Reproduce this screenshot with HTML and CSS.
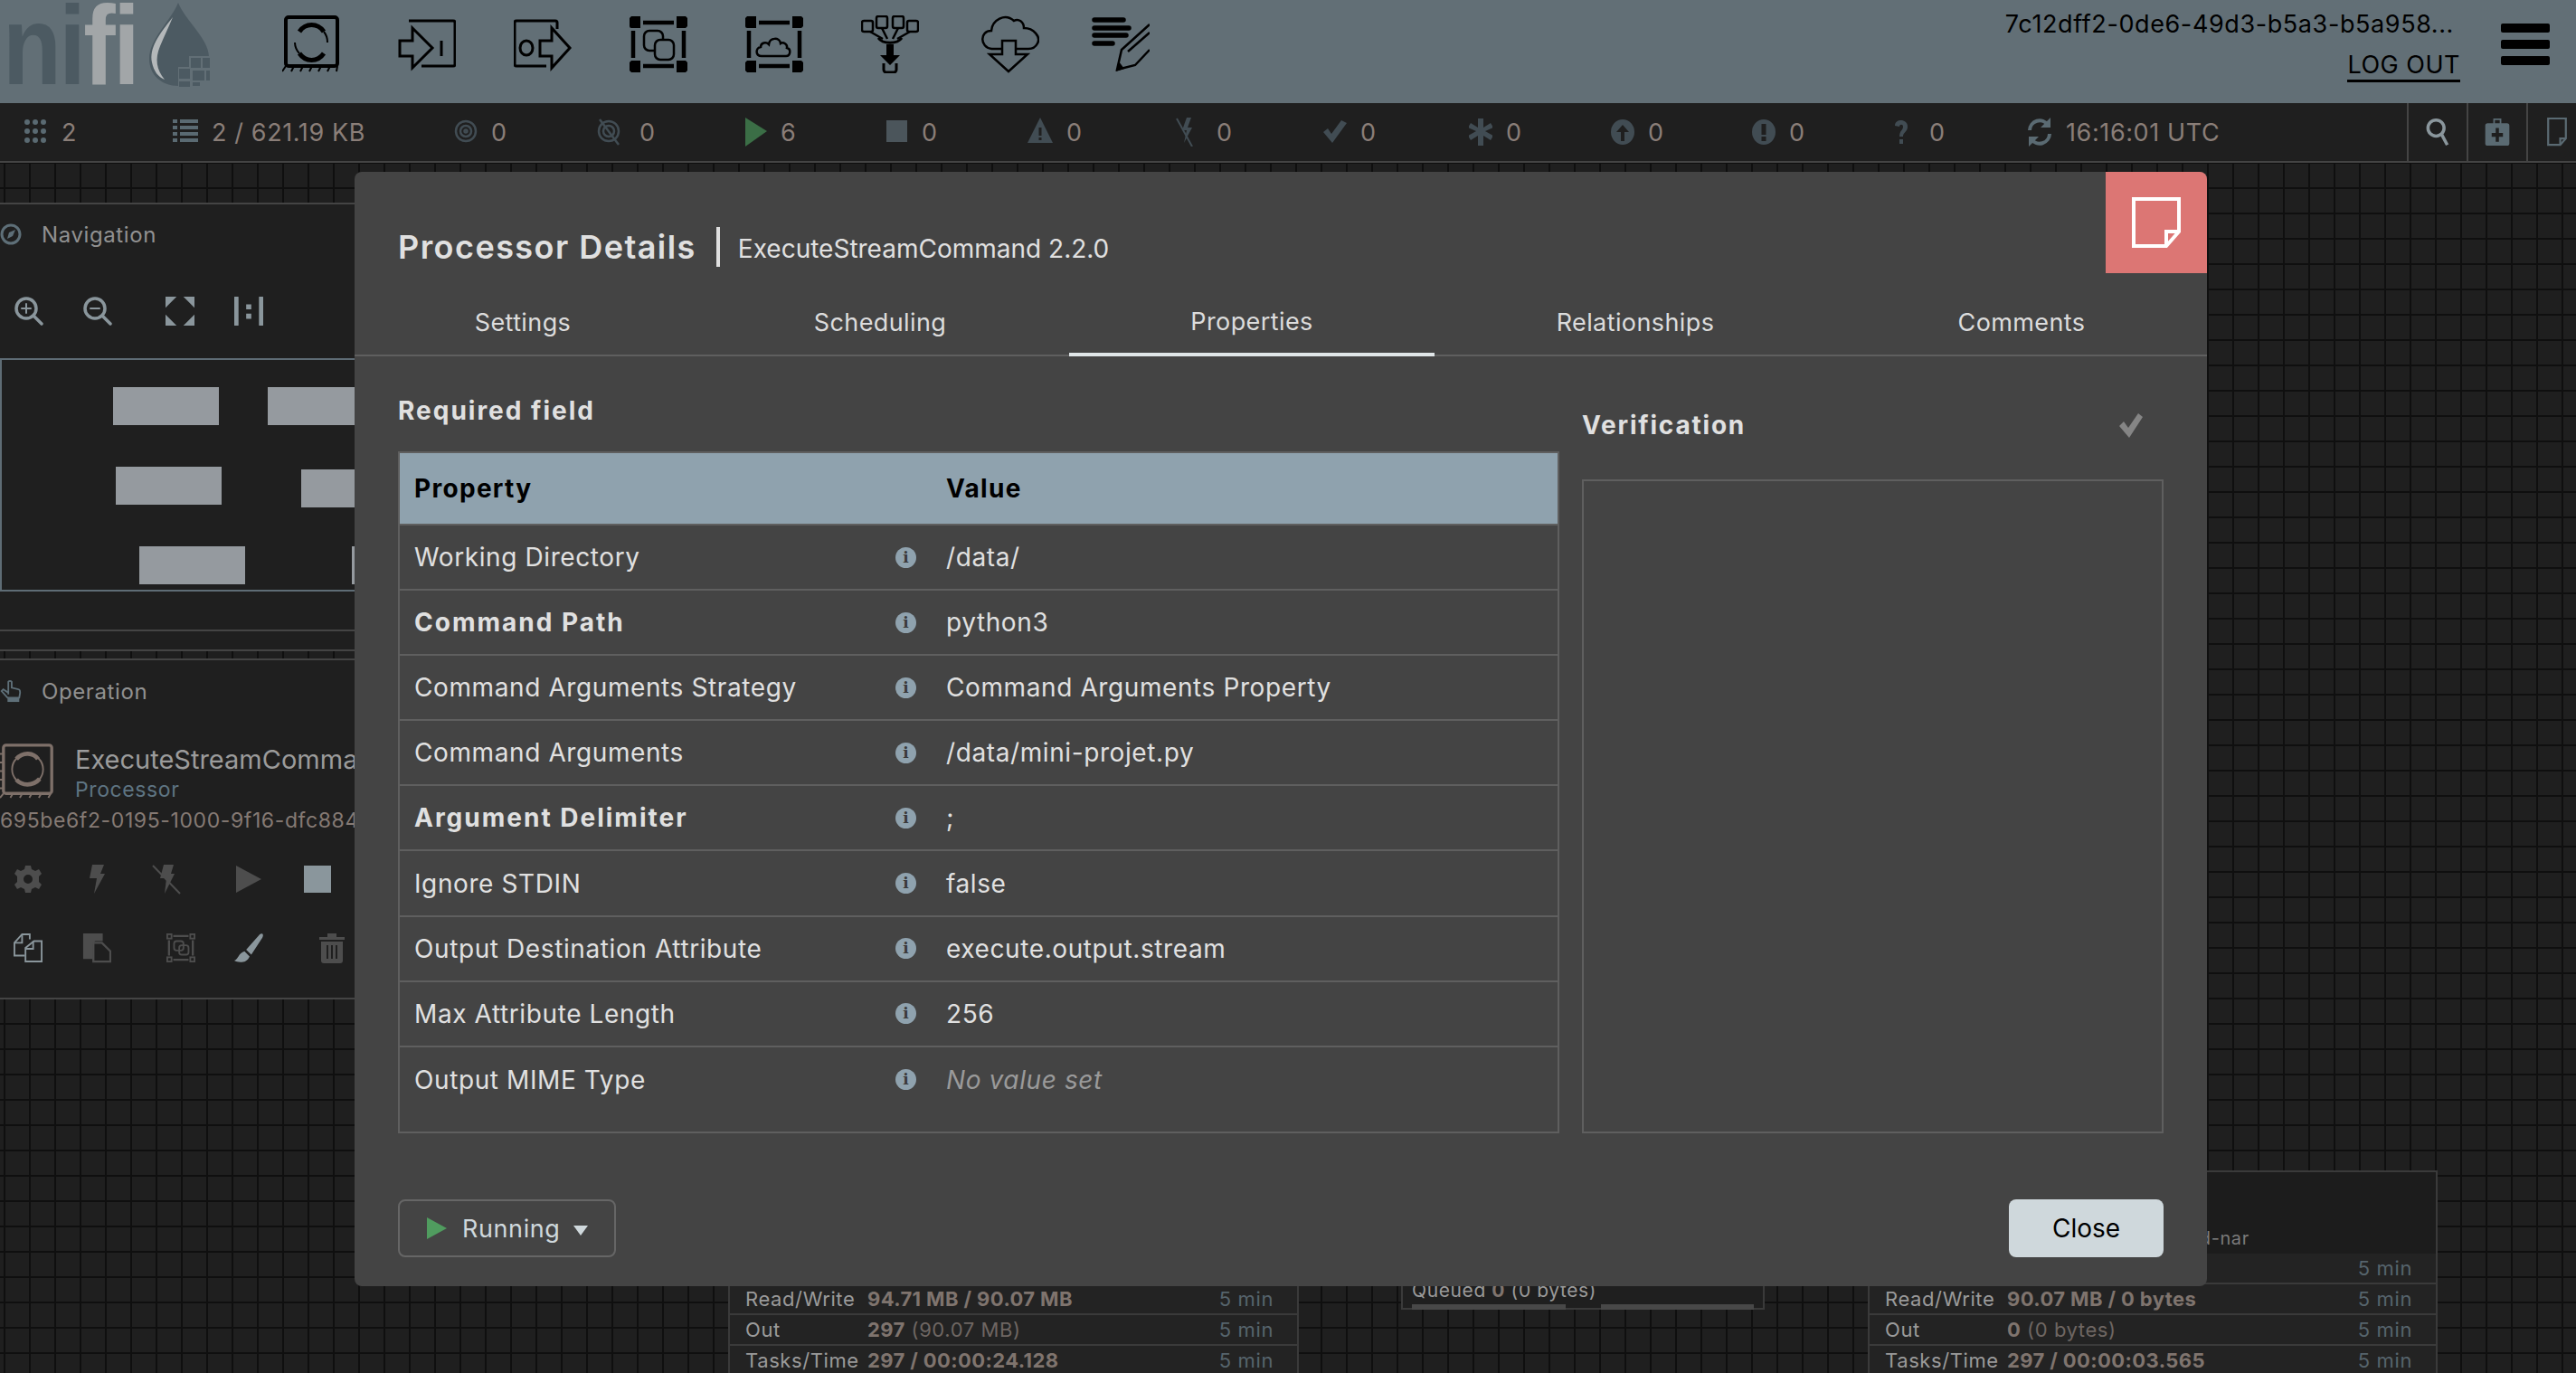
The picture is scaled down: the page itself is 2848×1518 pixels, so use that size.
FILE: index.html

```html
<!DOCTYPE html>
<html lang="en">
<head>
  <meta charset="UTF-8" />
  <title>NiFi - Processor Details</title>
  <link rel="stylesheet" href="styles.css">
</head>
<body>
  <header class="topbar">
    <div class="logo">
      <span class="logo-text"><span class="logo-dark">ni</span><span class="logo-light">fi</span></span>
      <svg class="logo-drop" viewBox="0 0 70 95">
        <path fill="#4c5a62" d="M32 0C24 20 0 40 0 62C0 80 14 92 32 92C50 92 66 80 66 60C66 40 40 20 32 0Z"/>
        <path fill="#b4b8ba" d="M26 16C10 36 0 50 3 66C5 76 10 82 17 85C8 74 6 62 12 48C16 38 22 26 26 16Z"/>
        <path fill="#626f76" d="M44 59H70V95H32V71H44Z"/>
        <path fill="#4c5a62" d="M46 61H57V72H46ZM59 61H67V72H59ZM33 73H45V84H33ZM48 75H61V86H48ZM63 75H67V86H63ZM33 87H45V93H33ZM48 88H56V92H48Z"/>
      </svg>
    </div>
    <div class="tools">
      <svg class="tool" viewBox="0 0 64 64" fill="none" stroke="#000" stroke-width="4">
        <rect x="4" y="2" width="57" height="54" rx="3"/>
        <path d="M0 62L4 56M10 62L13 56M20 62L23 56M30 62L33 56M40 62L43 56M50 62L53 56M60 62L61 56" stroke-width="2"/>
        <path d="M19 18A17 19 0 0 1 46 18" stroke-width="5"/>
        <path d="M46 42A17 19 0 0 1 19 42" stroke-width="5"/>
        <path d="M14 30A18 18 0 0 0 19 42M50 30A18 18 0 0 0 46 18" stroke-width="2"/>
      </svg>
      <svg class="tool" viewBox="0 0 64 64" fill="none" stroke="#000" stroke-width="3">
        <path d="M12 6H61A2 2 0 0 1 63 8V54A2 2 0 0 1 61 56H26"/>
        <path d="M2 28H16V14L38 36L16 58V45H2Z"/>
        <path d="M48 28V45"/>
      </svg>
      <svg class="tool" viewBox="0 0 64 64" fill="none" stroke="#000" stroke-width="3">
        <path d="M48 15V8A2 2 0 0 0 46 6H3A2 2 0 0 0 1 8V54A2 2 0 0 0 3 56H36"/>
        <ellipse cx="14" cy="36" rx="7" ry="8"/>
        <path d="M29 28H42V14L62 36L42 58V45H29Z"/>
      </svg>
      <svg class="tool" viewBox="0 0 64 64" fill="none" stroke="#000" stroke-width="2.500">
        <path fill="#000" stroke="none" d="M2 1H12V14H2A2 2 0 0 1 0 12V3ZM52 1H62L64 3V12L62 14H52ZM2 50H12V63H2L0 61V52ZM52 50H62L64 52V61L62 63H52Z"/>
        <path stroke-width="4.500" d="M15 8H49M15 56H49M4 17V47M60 17V47"/>
        <rect x="16" y="17" width="21" height="22" rx="6"/>
        <rect x="28" y="27" width="21" height="22" rx="6" fill="#626f76"/>
      </svg>
      <svg class="tool" viewBox="0 0 64 64" fill="none" stroke="#000" stroke-width="2.500">
        <path fill="#000" stroke="none" d="M2 1H12V14H2A2 2 0 0 1 0 12V3ZM52 1H62L64 3V12L62 14H52ZM2 50H12V63H2L0 61V52ZM52 50H62L64 52V61L62 63H52Z"/>
        <path stroke-width="4.500" d="M15 8H49M15 56H49M4 17V47M60 17V47"/>
        <path d="M18 45C11 45 11 36 17 35C17 30 23 29 26 32C27 24 38 24 39 31C42 29 47 32 46 36C51 37 50 45 45 45Z"/>
      </svg>
      <svg class="tool tool-funnel" viewBox="0 0 64 64" fill="none" stroke="#000" stroke-width="2.500">
        <rect x="1" y="6" width="12" height="12" rx="2"/><rect x="17" y="1" width="12" height="13" rx="2"/>
        <rect x="35" y="1" width="12" height="13" rx="2"/><rect x="51" y="6" width="12" height="12" rx="2"/>
        <path d="M10 18L24 26M23 14L29 26M41 14L35 26M54 18L40 26"/>
        <path stroke-width="3" d="M19 25C24 32 40 32 45 25"/>
        <path fill="#000" stroke="none" d="M28 32H36V44H43L32 55L21 44H28Z"/>
        <path stroke-width="3" d="M25 53V60A3 3 0 0 0 28 63H36A3 3 0 0 0 39 60V53"/>
      </svg>
      <svg class="tool" viewBox="0 0 64 64" fill="none" stroke="#000" stroke-width="2.500">
        <path d="M11 37C-2 35 -2 17 11 17C12 5 26 -3 36 6C41 3 47 7 47 14C58 14 66 24 62 31C60 35 56 37 52 37H39"/>
        <path d="M24 37H11"/>
        <path d="M23 43V28H38V43H51L30 62L9 43Z"/>
      </svg>
      <svg class="tool tool-label" viewBox="0 0 64 64" fill="none" stroke="#000" stroke-width="2.500">
        <path stroke-width="5.500" stroke-linecap="round" d="M3 5H35M3 14H41M3 22H38M3 31H23"/>
        <path d="M64 10L33 38L28 60L48 55L64 38"/>
        <path d="M40 40L64 19"/>
        <path fill="#000" stroke="none" d="M27 62L30 51L36 59Z"/>
      </svg>
    </div>
    <div class="user">
      <div class="user-id">7c12dff2-0de6-49d3-b5a3-b5a958...</div>
      <div class="logout">LOG OUT</div>
    </div>
    <div class="burger"><span></span><span></span><span></span></div>
  </header>

  <div class="statusbar">
    <div class="stats">
      <div class="stat">
        <svg viewBox="0 0 28 32" fill="#5a6a72"><circle cx="5" cy="5" r="3"/><circle cx="14" cy="5" r="3"/><circle cx="23" cy="5" r="3"/><circle cx="5" cy="15" r="3"/><circle cx="14" cy="15" r="3"/><circle cx="23" cy="15" r="3"/><circle cx="5" cy="25" r="3"/><circle cx="14" cy="25" r="3"/><circle cx="23" cy="25" r="3"/></svg>2
      </div>
      <div class="stat">
        <svg viewBox="0 0 28 32" fill="#5a6a72"><path d="M0 2H5V6H0ZM8 2H28V6H8ZM0 9H5V13H0ZM8 9H28V13H8ZM0 16H5V20H0ZM8 16H28V20H8ZM0 23H5V27H0ZM8 23H28V27H8Z"/></svg>2 / 621.19 KB
      </div>
      <div class="stat">
        <svg viewBox="0 0 26 32" fill="none" stroke="#414c53" stroke-width="2.500"><circle cx="13" cy="15" r="11"/><circle cx="13" cy="15" r="6"/><circle cx="13" cy="15" r="1.500"/></svg>0
      </div>
      <div class="stat">
        <svg viewBox="0 0 32 32" fill="none" stroke="#414c53" stroke-width="2.500"><circle cx="13" cy="15" r="11"/><circle cx="13" cy="15" r="6"/><path d="M3 2L24 30"/></svg>0
      </div>
      <div class="stat">
        <svg viewBox="0 0 24 32" fill="#3b6e46"><path d="M0 0L24 15L0 32Z"/></svg>6
      </div>
      <div class="stat">
        <svg viewBox="0 0 24 32" fill="#4b555b"><rect y="3" width="23" height="24"/></svg>0
      </div>
      <div class="stat">
        <svg viewBox="0 0 28 32" fill="#414c53"><path d="M14 0L28 28H0ZM12.500 11V20H15.500V11ZM12.500 22V25H15.500V22Z" fill-rule="evenodd"/></svg>0
      </div>
      <div class="stat">
        <svg viewBox="0 0 32 32" fill="#414c53"><path d="M14 0L9 14H14L11 28L20 11H15L19 0Z"/><path d="M3 1L20 32" stroke="#414c53" stroke-width="2"/></svg>0
      </div>
      <div class="stat">
        <svg viewBox="0 0 26 32" fill="#414c53"><path d="M0 16L5 12L9 18L20 3L26 6L10 28Z"/></svg>0
      </div>
      <div class="stat">
        <svg viewBox="0 0 26 32" fill="#414c53"><path d="M10 1H16V11L24 6L27 11L18 15L27 20L24 25L16 20V31H10V20L2 25L-1 20L8 15L-1 11L2 6L10 11Z"/></svg>0
      </div>
      <div class="stat">
        <svg viewBox="0 0 26 32" fill="#414c53"><path fill-rule="evenodd" d="M13 2A13 14 0 1 1 13 30A13 14 0 1 1 13 2ZM13 8L6 16H11V26H15V16H20Z"/></svg>0
      </div>
      <div class="stat">
        <svg viewBox="0 0 26 32" fill="#414c53"><path fill-rule="evenodd" d="M13 2A13 14 0 1 1 13 30A13 14 0 1 1 13 2ZM10.500 7V19H15.500V7ZM10.500 21V26H15.500V21Z"/></svg>0
      </div>
      <div class="stat">
        <svg viewBox="0 0 24 32" fill="#414c53"><path d="M1 9C1 1 15 1 15 10C15 16 10 16 10 21H6C6 14 10 14 10 10C10 7 6 7 6 10ZM6 24H10V29H6Z"/></svg>0
      </div>
      <div class="stat stat-time">
        <svg viewBox="0 0 28 32" fill="none" stroke="#5a6a72" stroke-width="4"><path d="M3 14A11 11 0 0 1 23 8"/><path d="M25 18A11 11 0 0 1 5 24"/><path fill="#5a6a72" stroke="none" d="M26 0V11H15ZM2 32V21H13Z"/></svg>16:16:01 UTC
      </div>
    </div>
    <div class="bar-btn bar-search">
      <svg viewBox="0 0 30 36" fill="none" stroke="#8a969c" stroke-width="4"><circle cx="13" cy="13" r="10"/><path d="M20 21L27 34"/></svg>
    </div>
    <div class="bar-btn">
      <svg viewBox="0 0 30 36" fill="#5a6a72"><path fill-rule="evenodd" d="M10 1H20V7H27A3 3 0 0 1 30 10V32A3 3 0 0 1 27 35H3A3 3 0 0 1 0 32V10A3 3 0 0 1 3 7H10ZM12 3V7H18V3ZM13 13V19H8V24H13V30H17V24H22V19H17V13Z"/></svg>
    </div>
    <div class="bar-btn bar-note">
      <svg viewBox="0 0 26 36" fill="none" stroke="#5a6a72" stroke-width="2.500"><path d="M2 1H24V26L17 34H2Z"/><path d="M24 26H17V34"/></svg>
    </div>
  </div>

  <main class="canvas">
    <section class="panel panel-nav">
      <div class="panel-title">
        <svg viewBox="0 0 24 24" fill="none" stroke="#5e6f78" stroke-width="3"><circle cx="12" cy="12" r="10"/><path fill="#5e6f78" stroke="none" d="M17 7L14 14L8 17L10 10Z"/></svg>
        Navigation
      </div>
      <div class="nav-tools">
        <svg viewBox="0 0 32 32" fill="none" stroke="#8a969c" stroke-width="3.500" stroke-linecap="round"><circle cx="13" cy="13" r="11"/><path d="M21 21L30 30"/><path stroke-width="2" d="M13 8V18M8 13H18"/></svg>
        <svg viewBox="0 0 32 32" fill="none" stroke="#8a969c" stroke-width="3.500" stroke-linecap="round"><circle cx="13" cy="13" r="11"/><path d="M21 21L30 30"/><path stroke-width="2" d="M8 13H18"/></svg>
        <svg viewBox="0 0 34 34" fill="#8a969c"><path d="M0 0H13L0 13ZM21 0H34V13ZM0 21L13 34H0ZM34 21V34H21Z"/></svg>
        <svg viewBox="0 0 34 34" fill="#8a969c"><path d="M0 1A1 1 0 0 1 5 1V33A1 1 0 0 1 0 33ZM29 1A1 1 0 0 1 34 1V33A1 1 0 0 1 29 33ZM14 9H20V15H14ZM14 20H20V26H14Z"/></svg>
      </div>
      <div class="minimap">
        <div class="mini-node mini-a"></div>
        <div class="mini-node mini-b"></div>
        <div class="mini-node mini-c"></div>
        <div class="mini-node mini-d"></div>
        <div class="mini-node mini-e"></div>
        <div class="mini-node mini-f"></div>
      </div>
      <div class="nav-rule"></div>
    </section>

    <section class="panel panel-op">
      <div class="panel-title">
        <svg viewBox="0 0 24 28" fill="none" stroke="#5e6f78" stroke-width="2"><path d="M9 18V3A2.500 2.500 0 0 1 13 3V10L21 12C23 12 23 14 23 16L22 22H8L1 14L3 12L9 16"/><path fill="#5e6f78" stroke="none" d="M8 22H22V27H8Z"/></svg>
        Operation
      </div>
      <div class="op-head">
        <svg class="op-icon" viewBox="0 0 64 64" fill="none" stroke="#7e7069" stroke-width="3.500">
          <rect x="4" y="2" width="56" height="56" rx="3"/>
          <path stroke-width="2" d="M0 63L4 58M12 63L15 58M23 63L26 58M34 63L37 58M45 63L48 58M56 63L59 58M0 12H4M0 22H4M0 32H4M0 42H4M0 52H4"/>
          <circle cx="32" cy="30" r="18" stroke-width="2"/>
          <path stroke-width="5" d="M19 18C27 9 39 11 44 18M46 41C38 50 25 49 19 42"/>
        </svg>
        <div class="op-names">
          <div class="op-name">ExecuteStreamCommand</div>
          <div class="op-type">Processor</div>
        </div>
      </div>
      <div class="op-id">695be6f2-0195-1000-9f16-dfc884f3a2c1</div>
      <div class="op-row op-row-one">
        <svg viewBox="0 0 32 32" fill="#4d4d4d"><path fill-rule="evenodd" d="M13 1H19L20 5L24 7L28 5L31 10L28 13V19L31 22L28 27L24 25L20 27L19 31H13L12 27L8 25L4 27L1 22L4 19V13L1 10L4 5L8 7L12 5ZM16 11A5 5 0 1 0 16 21A5 5 0 0 0 16 11Z"/></svg>
        <svg viewBox="0 0 32 32" fill="#4d4d4d"><path d="M11 0H24L20 10H25L13 32L16 15H8Z"/></svg>
        <svg viewBox="0 0 32 32" fill="#4d4d4d"><path d="M13 0H24L21 10H25L14 32L16 15H9Z"/><path d="M1 1L31 32" stroke="#4d4d4d" stroke-width="2"/></svg>
        <svg viewBox="0 0 32 32" fill="#4d4d4d"><path d="M2 1L30 16L2 31Z"/></svg>
        <svg viewBox="0 0 32 32" fill="#8a969c"><rect x="1" y="1" width="30" height="30"/></svg>
      </div>
      <div class="op-row op-row-two">
        <svg viewBox="0 0 34 34" fill="none" stroke="#8a969c" stroke-width="2"><path d="M19 7V1H10L1 11V26H13"/><path d="M10 1V11H1"/><path d="M24 9H33V33H14V17Z"/><path d="M23 9V18H14"/></svg>
        <svg viewBox="0 0 34 34"><path fill="#4d4d4d" d="M1 0H24V9H15L12 13V30H1Z"/><path fill="none" stroke="#4d4d4d" stroke-width="2.500" d="M13 11H23L33 21V33H13Z"/></svg>
        <svg viewBox="0 0 34 34" fill="none" stroke="#4d4d4d" stroke-width="2"><rect x="1" y="1" width="5" height="5"/><rect x="28" y="1" width="5" height="5"/><rect x="1" y="28" width="5" height="5"/><rect x="28" y="28" width="5" height="5"/><path stroke-width="2.500" d="M8 3H26M8 31H26M3 8V26M31 8V26"/><rect x="9" y="9" width="11" height="11" rx="3"/><rect x="15" y="14" width="11" height="11" rx="3"/></svg>
        <svg viewBox="0 0 34 34" fill="#8a969c"><path d="M14 19L30 1C33 -1 35 1 33 5L20 25ZM12 21L18 27C15 35 5 35 0 32C5 30 5 23 12 21Z"/></svg>
        <svg viewBox="0 0 30 34" fill="#4d4d4d"><path fill-rule="evenodd" d="M10 1H20V5H29V8H1V5H10ZM3 10H27V31A3 3 0 0 1 24 34H6A3 3 0 0 1 3 31ZM9 14V29H11V14ZM14 14V29H16V14ZM19 14V29H21V14Z"/></svg>
      </div>
    </section>

    <article class="node node-left">
      <div class="node-head"></div>
      <div class="node-row"><span class="node-age">5 min</span></div>
      <div class="node-row"><span class="node-label">Read/Write</span><span class="node-value"><b>94.71 MB / 90.07 MB</b></span><span class="node-age">5 min</span></div>
      <div class="node-row"><span class="node-label">Out</span><span class="node-value"><b>297</b> (90.07 MB)</span><span class="node-age">5 min</span></div>
      <div class="node-row"><span class="node-label">Tasks/Time</span><span class="node-value"><b>297 / 00:00:24.128</b></span><span class="node-age">5 min</span></div>
    </article>

    <article class="conn-label">
      <div class="conn-text">Queued <b>0</b> (0 bytes)</div>
      <div class="conn-bars"><span></span><span></span></div>
    </article>

    <article class="node node-right">
      <div class="node-head"><span class="node-bundle">rd-nar</span></div>
      <div class="node-row"><span class="node-age">5 min</span></div>
      <div class="node-row"><span class="node-label">Read/Write</span><span class="node-value"><b>90.07 MB / 0 bytes</b></span><span class="node-age">5 min</span></div>
      <div class="node-row"><span class="node-label">Out</span><span class="node-value"><b>0</b> (0 bytes)</span><span class="node-age">5 min</span></div>
      <div class="node-row"><span class="node-label">Tasks/Time</span><span class="node-value"><b>297 / 00:00:03.565</b></span><span class="node-age">5 min</span></div>
    </article>
  </main>

  <div class="modal">
    <div class="modal-note">
      <svg viewBox="0 0 54 56" fill="none" stroke="#fff" stroke-width="4"><path d="M2 2H52V38L38 54H2Z"/><path d="M52 38H38V54"/></svg>
    </div>
    <div class="modal-head">
      <span class="modal-title">Processor Details</span>
      <span class="modal-sep"></span>
      <span class="modal-sub">ExecuteStreamCommand 2.2.0</span>
    </div>
    <div class="tabs">
      <div class="tab">Settings</div>
      <div class="tab">Scheduling</div>
      <div class="tab tab-active">Properties</div>
      <div class="tab">Relationships</div>
      <div class="tab">Comments</div>
    </div>
    <div class="modal-body">
      <div class="col-props">
        <div class="required">Required field</div>
        <div class="props">
          <div class="prop-row prop-head"><div class="prop-name">Property</div><div class="prop-value">Value</div></div>
          <div class="prop-row"><div class="prop-name">Working Directory<span class="info">i</span></div><div class="prop-value">/data/</div></div>
          <div class="prop-row"><div class="prop-name is-required">Command Path<span class="info">i</span></div><div class="prop-value">python3</div></div>
          <div class="prop-row"><div class="prop-name">Command Arguments Strategy<span class="info">i</span></div><div class="prop-value">Command Arguments Property</div></div>
          <div class="prop-row"><div class="prop-name">Command Arguments<span class="info">i</span></div><div class="prop-value">/data/mini-projet.py</div></div>
          <div class="prop-row"><div class="prop-name is-required">Argument Delimiter<span class="info">i</span></div><div class="prop-value">;</div></div>
          <div class="prop-row"><div class="prop-name">Ignore STDIN<span class="info">i</span></div><div class="prop-value">false</div></div>
          <div class="prop-row"><div class="prop-name">Output Destination Attribute<span class="info">i</span></div><div class="prop-value">execute.output.stream</div></div>
          <div class="prop-row"><div class="prop-name">Max Attribute Length<span class="info">i</span></div><div class="prop-value">256</div></div>
          <div class="prop-row prop-last"><div class="prop-name">Output MIME Type<span class="info">i</span></div><div class="prop-value no-value">No value set</div></div>
        </div>
      </div>
      <div class="col-verify">
        <div class="verify-head">
          <span>Verification</span>
          <svg viewBox="0 0 26 28" fill="#858585"><path d="M0 15L5 10L10 17L21 1L26 5L11 28Z"/></svg>
        </div>
        <div class="verify-box"></div>
      </div>
    </div>
    <div class="modal-foot">
      <div class="btn-running">
        <svg class="run-play" viewBox="0 0 22 24" fill="#509c5f"><path d="M0 0L22 12L0 24Z"/></svg>
        Running
        <svg class="run-caret" viewBox="0 0 16 11" fill="#cfd8dc"><path d="M0 0H16L8 11Z"/></svg>
      </div>
      <div class="btn-close">Close</div>
    </div>
  </div>
</body>
</html>
```

FILE: styles.css

```css
* {
  box-sizing: border-box;
}
body {
  margin: 0;
  width: 2848px;
  height: 1518px;
  overflow: hidden;
  position: relative;
  display: flex;
  flex-direction: column;
  font-family: Inter, "Noto Sans", sans-serif;
  letter-spacing: 0.6px;
  background-color: #1f1f1f;
  color: #e0e0e0;
}
b {
  font-weight: 700;
}

/* top bar */
.topbar {
  height: 114px;
  flex: none;
  display: flex;
  background-color: #626f76;
  color: #000;
}
.logo {
  width: 312px;
  flex: none;
  position: relative;
}
.logo-text {
  position: absolute;
  left: 3px;
  top: 0;
  font-family: "Liberation Sans", sans-serif;
  font-weight: 700;
  font-size: 125px;
  line-height: 100px;
  letter-spacing: -3px;
  transform: scaleX(0.85);
  transform-origin: 0 0;
}
.logo-dark {
  color: #4c5a62;
}
.logo-light {
  color: #a2a6a8;
}
.logo-drop {
  position: absolute;
  left: 165px;
  top: 3px;
  width: 70px;
  height: 95px;
}
.tools {
  display: flex;
  gap: 64px;
  padding-top: 17px;
  width: 959px;
  flex: none;
}
.tool {
  width: 64px;
  height: 64px;
  flex: none;
}
.tool-funnel {
  margin-right: 5px;
}
.tool-label {
  margin-left: -6px;
}
.user {
  flex: 1;
  text-align: right;
  padding-right: 135px;
  position: relative;
  font-size: 27px;
}
.user-id {
  line-height: 34px;
  padding-top: 10px;
}
.logout {
  display: inline-block;
  margin-top: 12px;
  margin-right: -7px;
  line-height: 32px;
  border-bottom: 3px solid #000;
  letter-spacing: 0.5px;
}
.burger {
  position: absolute;
  left: 2765px;
  top: 26px;
  display: flex;
  flex-direction: column;
  gap: 8px;
}
.burger span {
  width: 54px;
  height: 10px;
  border-radius: 2px;
  background-color: #000;
}

/* status bar */
.statusbar {
  height: 66px;
  flex: none;
  display: flex;
  background-color: #1f1f1f;
  border-bottom: 2px solid #444;
  color: #8a7e78;
  font-size: 27px;
}
.stats {
  flex: 1;
  display: grid;
  grid-template-columns: 166px 311px 158px 164px 156px 156px 162px 165px 161px 157px 156px 157px 147px auto;
  padding-left: 25px;
  align-items: center;
}
.stat {
  display: flex;
  align-items: center;
  gap: 15px;
}
.stat svg {
  height: 32px;
  width: auto;
  flex: none;
}
.bar-btn {
  width: 66px;
  flex: none;
  border-left: 2px solid #444;
  display: flex;
  align-items: center;
  justify-content: center;
}
.bar-btn svg {
  height: 32px;
  width: 28px;
}
.bar-note {
  width: 55px;
  justify-content: flex-start;
  padding-left: 18px;
}

/* canvas */
.canvas {
  flex: 1;
  position: relative;
  background-image:
    linear-gradient(#0f0f0f 2px, transparent 2px),
    linear-gradient(90deg, #0f0f0f 2px, transparent 2px);
  background-size: 28px 28px;
  background-position: 4px 27px;
}
.panel {
  position: absolute;
  left: 0;
  width: 392px;
  overflow: hidden;
  background-color: #1f1f1f;
  border-top: 2px solid #444;
  border-bottom: 2px solid #444;
}
.panel-nav {
  top: 44px;
  height: 496px;
}
.panel-op {
  top: 548px;
  height: 377px;
}
.panel-title {
  display: flex;
  align-items: center;
  gap: 22px;
  height: 66px;
  font-size: 24px;
  color: #919191;
}
.panel-title svg {
  width: 24px;
  height: 26px;
  flex: none;
}
.nav-tools {
  display: flex;
  align-items: center;
  height: 34px;
  margin-top: 35px;
  padding-left: 16px;
}
.nav-tools svg {
  width: 32px;
  height: 32px;
  flex: none;
  margin-right: 44px;
}
.nav-tools svg:nth-child(2) {
  margin-right: 59px;
}
.minimap {
  position: relative;
  height: 258px;
  margin-top: 35px;
  border: 2px solid #5e6c75;
  border-right: none;
}
.mini-node {
  position: absolute;
  width: 117px;
  height: 42px;
  background-color: #959a9f;
}
.mini-a { left: 123px; top: 30px; }
.mini-b { left: 294px; top: 30px; }
.mini-c { left: 126px; top: 118px; }
.mini-d { left: 331px; top: 121px; }
.mini-e { left: 152px; top: 206px; }
.mini-f { left: 387px; top: 206px; }
.nav-rule {
  margin-top: 42px;
  border-top: 2px solid #444;
}
.panel-op .panel-title {
  height: 68px;
}
.op-head {
  display: flex;
  gap: 22px;
  margin-top: 24px;
  height: 62px;
}
.op-icon {
  width: 61px;
  height: 61px;
  flex: none;
}
.op-names {
  white-space: nowrap;
}
.op-name {
  font-size: 29px;
  letter-spacing: 0;
  line-height: 36px;
  color: #9b9b9b;
}
.op-type {
  font-size: 23px;
  line-height: 30px;
  color: #5e7482;
}
.op-id {
  font-size: 23px;
  line-height: 30px;
  margin-top: 8px;
  white-space: nowrap;
  color: #857a74;
}
.op-row {
  display: grid;
  padding-left: 15px;
  align-items: center;
}
.op-row svg {
  width: 32px;
  height: 34px;
}
.op-row-one {
  grid-template-columns: 76px 77px 91px 76px 32px;
  margin-top: 33px;
}
.op-row-two {
  grid-template-columns: 76px 93px 75px 92px 32px;
  margin-top: 42px;
}

/* nodes behind the dialog */
.node {
  position: absolute;
  top: 1114px;
  height: 242px;
  background-color: #232323;
  border: 2px solid #3a3a3a;
  font-size: 22px;
}
.node-left {
  left: 805px;
  width: 631px;
}
.node-right {
  left: 2065px;
  width: 630px;
}
.node-head {
  height: 90px;
  background-color: #1c1c1c;
  padding: 59px 0 0 357px;
  white-space: nowrap;
  overflow: hidden;
}
.node-bundle {
  font-size: 20px;
  line-height: 24px;
  color: #7a7a7a;
}
.node-row {
  height: 34px;
  display: flex;
  align-items: center;
  border-bottom: 2px solid #3a3a3a;
  padding: 0 26px 0 17px;
  white-space: nowrap;
}
.node-label {
  width: 135px;
  color: #9a9a9a;
}
.node-value {
  flex: 1;
  color: #6e6662;
}
.node-value b {
  color: #7f746e;
  letter-spacing: 0.4px;
}
.node-age {
  margin-left: auto;
  color: #56646c;
}
.conn-label {
  position: absolute;
  left: 1549px;
  top: 1220px;
  width: 402px;
  height: 48px;
  padding: 10px 10px 0;
  background-color: #1f1f1f;
  border: 2px solid #3a3a3a;
  font-size: 21px;
}
.conn-text {
  line-height: 30px;
  color: #9a9a9a;
}
.conn-text b {
  color: #7f746e;
}
.conn-bars {
  display: flex;
  justify-content: space-between;
  gap: 39px;
}
.conn-bars span {
  flex: 1;
  height: 6px;
  background-color: #484848;
}

/* dialog */
.modal {
  position: absolute;
  left: 392px;
  top: 190px;
  width: 2048px;
  height: 1232px;
  background-color: #444;
  border-radius: 8px;
}
.modal-note {
  position: absolute;
  right: 0;
  top: 0;
  width: 112px;
  height: 112px;
  background-color: #dc7674;
  border-top-right-radius: 8px;
  display: flex;
  align-items: center;
  justify-content: center;
}
.modal-note svg {
  width: 54px;
  height: 56px;
}
.modal-head {
  height: 130px;
  padding: 49px 0 13px 48px;
  display: flex;
  align-items: center;
}
.modal-title {
  font-size: 36px;
  font-weight: 600;
  letter-spacing: 1.45px;
}
.modal-sep {
  width: 4px;
  height: 44px;
  margin: 0 20px 0 22px;
  background-color: #e0e0e0;
}
.modal-sub {
  font-size: 28px;
  letter-spacing: 0;
  padding-top: 4px;
}
.tabs {
  display: grid;
  grid-template-columns: 372px 418px 404px 444px 410px;
  height: 74px;
  border-bottom: 2px solid #5f5f5f;
}
.tab {
  display: flex;
  align-items: center;
  justify-content: center;
  font-size: 27px;
  letter-spacing: 0.4px;
  color: #dcdcdc;
}
.tab-active {
  border-bottom: 4px solid #e0e6e8;
  margin-bottom: -2px;
}
.modal-body {
  display: flex;
  gap: 25px;
  padding: 0 48px;
  height: 859px;
}
.col-props {
  width: 1284px;
  flex: none;
  padding-top: 42px;
}
.required {
  font-size: 28px;
  font-weight: 700;
  letter-spacing: 2px;
  line-height: 36px;
  margin-bottom: 27px;
}
.props {
  height: 754px;
  border: 2px solid #5f5f5f;
}
.prop-row {
  display: grid;
  grid-template-columns: 604px 1fr;
  align-items: center;
  height: 72.1px;
  border-bottom: 2px solid #5f5f5f;
  font-size: 28px;
}
.prop-head {
  height: 80px;
  background-color: #8fa2ae;
  color: #000;
  font-weight: 700;
  letter-spacing: 1.3px;
}
.prop-last {
  border-bottom: none;
}
.prop-name {
  display: flex;
  justify-content: space-between;
  align-items: center;
  padding: 0 33px 0 16px;
}
.is-required {
  font-weight: 700;
  letter-spacing: 2px;
}
.info {
  width: 23px;
  height: 23px;
  flex: none;
  border-radius: 50%;
  background-color: #8fa2ae;
  color: #3a3a3a;
  font-family: "DejaVu Serif", serif;
  font-weight: 700;
  font-size: 17px;
  line-height: 23px;
  letter-spacing: 0;
  text-align: center;
}
.no-value {
  font-style: italic;
  color: #9a9a9a;
}
.col-verify {
  flex: 1;
  padding-top: 58px;
}
.verify-head {
  display: flex;
  justify-content: space-between;
  align-items: center;
  height: 36px;
  margin-bottom: 42px;
  padding-right: 23px;
  font-size: 28px;
  font-weight: 700;
  letter-spacing: 1.8px;
}
.verify-head svg {
  width: 26px;
  height: 28px;
}
.verify-box {
  height: 723px;
  border: 2px solid #5f5f5f;
}
.modal-foot {
  display: flex;
  justify-content: space-between;
  padding: 73px 48px 0;
}
.btn-running {
  width: 241px;
  height: 64px;
  display: flex;
  align-items: center;
  padding-left: 30px;
  border: 2px solid #666;
  border-radius: 8px;
  font-size: 27px;
  color: #cfd8dc;
}
.run-play {
  width: 22px;
  height: 24px;
  margin-right: 17px;
}
.run-caret {
  width: 16px;
  height: 11px;
  margin-left: 14px;
  margin-top: 4px;
}
.btn-close {
  width: 171px;
  height: 64px;
  display: flex;
  align-items: center;
  justify-content: center;
  border-radius: 8px;
  background-color: #cfd8dc;
  color: #000;
  font-size: 28px;
  letter-spacing: 0;
}
```
